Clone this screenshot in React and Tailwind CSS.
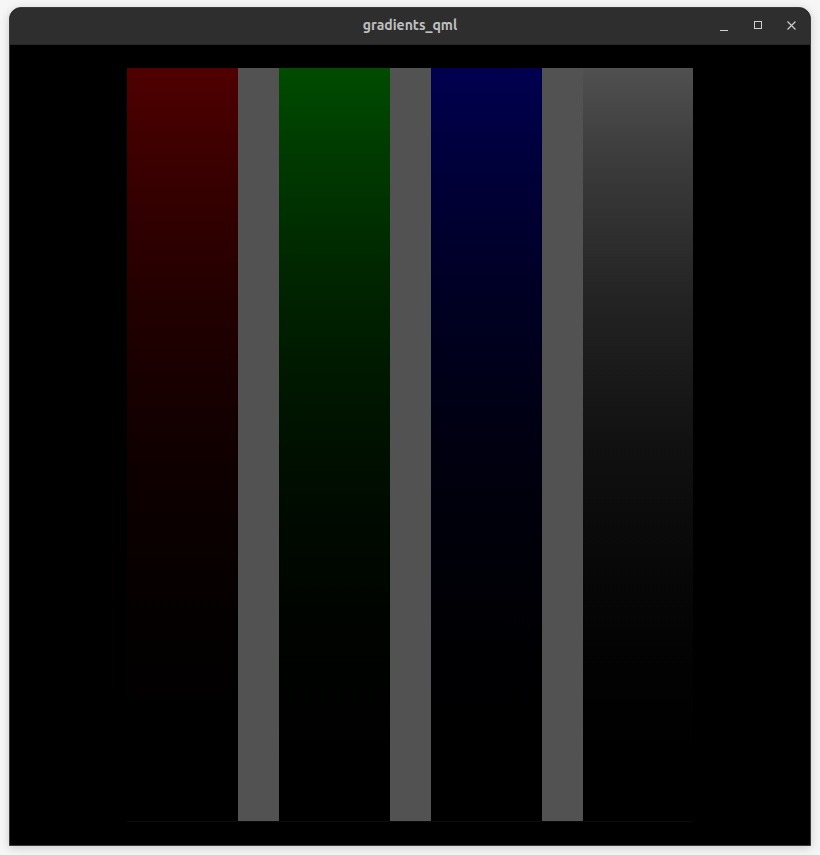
import React from 'react';

// stops follow (1 - t)^2.2, as in the reference
const bars = {
  red: 'bg-[linear-gradient(to_bottom,#500000_0%,#3f0000_10%,#310000_20%,#240000_30%,#1a0000_40%,#110000_50%,#0b0000_60%,#060000_70%,#020000_80%,#000000_92%)]',
  green: 'bg-[linear-gradient(to_bottom,#004c00_0%,#003c00_10%,#002f00_20%,#002300_30%,#001900_40%,#001100_50%,#000a00_60%,#000500_70%,#000200_80%,#000000_92%)]',
  blue: 'bg-[linear-gradient(to_bottom,#000050_0%,#00003f_10%,#000031_20%,#000024_30%,#00001a_40%,#000011_50%,#00000b_60%,#000006_70%,#000002_80%,#000000_92%)]',
  gray: 'bg-[linear-gradient(to_bottom,#505050_0%,#3f3f3f_10%,#313131_20%,#242424_30%,#1a1a1a_40%,#111111_50%,#0b0b0b_60%,#060606_70%,#020202_80%,#000000_92%)]',
};

const Spacer = () => <div className="w-[41px] h-full bg-[#525252]" />;

export default function App() {
  return (
    <div className="w-[820px] h-[855px] bg-[#f6f6f6] pt-[7px] pl-[9px]">
      <div className="w-[802px] h-[839px] flex flex-col rounded-t-[12px] overflow-hidden border border-[#3a3a3a] shadow-[0_2px_10px_rgba(0,0,0,0.18)] bg-black">
        <div className="h-[37px] shrink-0 bg-[#2e2e2e] border-b border-[#262626] relative flex items-center justify-center">
          <span className="text-[14px] font-bold text-[#c0c0c0] font-['Ubuntu','Noto_Sans',sans-serif] -mt-[1px]">
            gradients_qml
          </span>
          <div className="absolute right-[12px] top-0 h-full flex items-center gap-[22px] text-[#cfcfcf]">
            <svg width="12" height="12" viewBox="0 0 12 12">
              <path d="M2 10.5h8" stroke="currentColor" strokeWidth="1" />
            </svg>
            <svg width="12" height="12" viewBox="0 0 12 12">
              <rect x="2.5" y="1.5" width="7" height="7" fill="none" stroke="currentColor" strokeWidth="1" />
            </svg>
            <svg width="12" height="12" viewBox="0 0 12 12">
              <path d="M1.5 1.5l8 8M9.5 1.5l-8 8" stroke="currentColor" strokeWidth="1.1" />
            </svg>
          </div>
        </div>
        <div className="flex-1 pt-[23px] pl-[117px]">
          <div className="flex h-[754px] w-[566px] border-b border-[#0c0c0c]">
            <div className={`h-full w-[111px] ${bars.red}`} />
            <Spacer />
            <div className={`h-full w-[111px] ${bars.green}`} />
            <Spacer />
            <div className={`h-full w-[111px] ${bars.blue}`} />
            <Spacer />
            <div className={`h-full w-[110px] ${bars.gray}`} />
          </div>
        </div>
      </div>
    </div>
  );
}
